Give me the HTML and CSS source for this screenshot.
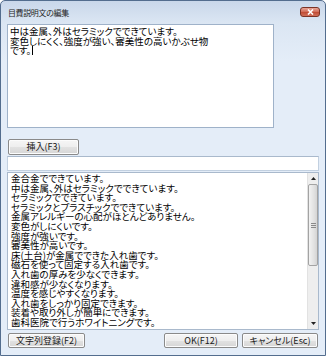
FILE: index.html
```html
<!DOCTYPE html>
<html lang="ja">
<head>
    <meta charset="UTF-8">
    <title>目費説明文の編集</title>
    <link rel="stylesheet" href="styles.css">
</head>
<body>
    <div class="window">
        <div class="titlebar">
            <span class="title">目費説明文の編集</span>
            <div class="close">
                <svg width="9" height="6" viewBox="0 0 9 6">
                    <path d="M2 0.5 L7 5.5 M7 0.5 L2 5.5" stroke="#fff" stroke-width="1.6"/>
                </svg>
            </div>
        </div>
        <div class="client">
            <div class="editor">
                <div>中は金属、外はセラミックでできています。</div>
                <div>変色しにくく、強度が強い、審美性の高いかぶせ物</div>
                <div>です。<span class="caret"></span></div>
            </div>
            <div class="row">
                <button class="btn insert">挿入(F3)</button>
            </div>
            <div class="field"></div>
            <div class="list">
                <div class="items">
                    <div>金合金でできています。</div>
                    <div>中は金属、外はセラミックでできています。</div>
                    <div>セラミックでできています。</div>
                    <div>セラミックとプラスチックでできています。</div>
                    <div>金属アレルギーの心配がほとんどありません。</div>
                    <div>変色がしにくいです。</div>
                    <div>強度が強いです。</div>
                    <div>審美性が高いです。</div>
                    <div>床(土台)が金属でできた入れ歯です。</div>
                    <div>磁石を使って固定する入れ歯です。</div>
                    <div>入れ歯の厚みを少なくできます。</div>
                    <div>違和感が少なくなります。</div>
                    <div>温度を感じやすくなります。</div>
                    <div>入れ歯をしっかり固定できます。</div>
                    <div>装着や取り外しが簡単にできます。</div>
                    <div>歯科医院で行うホワイトニングです。</div>
                </div>
                <div class="scrollbar">
                    <div class="arrow up">
                        <svg width="5" height="3" viewBox="0 0 5 3"><path d="M0 3 L2.5 0 L5 3 Z" fill="#222"/></svg>
                    </div>
                    <div class="thumb">
                        <span class="grip"></span>
                    </div>
                    <div class="track"></div>
                    <div class="arrow down">
                        <svg width="5" height="3" viewBox="0 0 5 3"><path d="M0 0 L5 0 L2.5 3 Z" fill="#222"/></svg>
                    </div>
                </div>
            </div>
            <div class="footer">
                <button class="btn register">文字列登録(F2)</button>
                <button class="btn ok">OK(F12)</button>
                <button class="btn cancel">キャンセル(Esc)</button>
            </div>
        </div>
    </div>
</body>
</html>
```

FILE: styles.css
```css
* {
    margin: 0;
    padding: 0;
    box-sizing: border-box;
    font-family: 'Noto Sans CJK JP', 'Noto Sans', sans-serif;
}
body {
    background: #fff;
}
.window {
    width: 326px;
    height: 356px;
    border: 1px solid #536d8e;
    border-radius: 5px 5px 0 0;
    background: linear-gradient(#c9d7ea, #dbe6f3 22px, #e4edf8 60px, #e4edf8);
    display: flex;
    flex-direction: column;
}
.titlebar {
    height: 22px;
    display: flex;
    align-items: center;
    padding: 0 5px 0 7px;
}
.title {
    font-size: 8px;
    letter-spacing: -0.4px;
    color: #1e1e1e;
}
.close {
    margin-left: auto;
    width: 20px;
    height: 10px;
    border: 1px solid #7a3326;
    border-radius: 3px;
    background: linear-gradient(#e8a597, #d06a56 50%, #c04a33 51%, #d0705a);
    display: flex;
    align-items: center;
    justify-content: center;
}
.client {
    flex: 1;
    display: flex;
    flex-direction: column;
    padding: 1px 6px 7px 6px;
}
.editor {
    width: 267px;
    height: 104px;
    background: #fff;
    border: 1px solid #9fb2c9;
    padding: 2px 2px;
    font-size: 9.5px;
    line-height: 9.7px;
    font-feature-settings: 'palt';
    color: #000;
}
.caret {
    display: inline-block;
    width: 1px;
    height: 9px;
    background: #000;
    vertical-align: -1px;
    margin-left: 1px;
}
.row {
    padding: 3px 0 1px 1px;
}
.btn {
    height: 16px;
    border: 1px solid #8a8a8a;
    border-radius: 2px;
    background: linear-gradient(#f6f6f6, #eeeeee 50%, #e2e2e2 51%, #d6d6d6);
    font-size: 9px;
    line-height: 14px;
    font-weight: 400;
    color: #1a1a1a;
    font-feature-settings: 'palt';
    box-shadow: inset 0 0 0 1px #fcfcfc;
}
.insert {
    width: 71px;
}
.field {
    height: 15px;
    background: #fff;
    border: 1px solid #c2d0e0;
    border-top-color: #a9b9cc;
}
.list {
    margin-top: 1px;
    height: 158px;
    background: #fff;
    border: 1px solid #a9b9cc;
    display: flex;
}
.items {
    flex: 1;
    padding: 1px 0 0 3px;
    font-size: 9.5px;
    line-height: 9.6px;
    font-feature-settings: 'palt';
    color: #000;
    white-space: nowrap;
}
.scrollbar {
    width: 11px;
    display: flex;
    flex-direction: column;
    background: #eeeeee;
    border-left: 1px solid #e2e2e2;
}
.arrow {
    height: 11px;
    display: flex;
    align-items: center;
    justify-content: center;
}
.thumb {
    height: 82px;
    border: 1px solid #a3a3a3;
    border-radius: 2px;
    background: linear-gradient(90deg, #f2f2f2, #e2e2e2 60%, #d4d4d4);
    display: flex;
    align-items: center;
    justify-content: center;
}
.grip {
    width: 5px;
    height: 5px;
    border-top: 1px solid #8a8a8a;
    border-bottom: 1px solid #8a8a8a;
    background: linear-gradient(#8a8a8a, #8a8a8a) center / 100% 1px no-repeat;
}
.track {
    flex: 1;
}
.footer {
    margin-top: auto;
    display: flex;
    padding-left: 1px;
}
.btn.register {
    width: 77px;
    height: 15px;
    line-height: 13px;
}
.btn.ok {
    width: 74px;
    height: 15px;
    line-height: 13px;
    margin-left: 79px;
}
.btn.cancel {
    width: 76px;
    height: 15px;
    line-height: 13px;
    margin-left: 4px;
}
```
